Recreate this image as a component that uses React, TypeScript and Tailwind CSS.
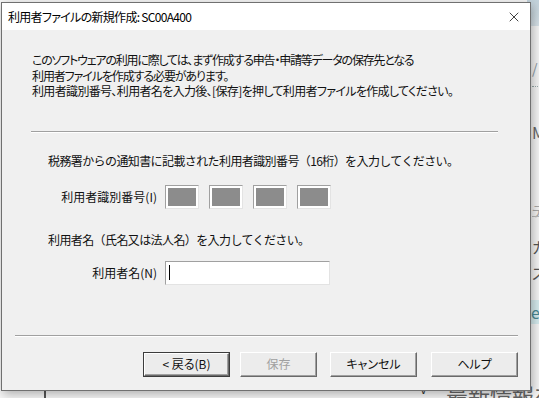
import { X } from 'lucide-react';

const jp = "font-['Noto_Sans_CJK_JP','Noto_Sans',sans-serif] [font-feature-settings:'palt']";

const IdBox = () => (
  <div className="w-[34px] h-[24px] border border-t-[#a0a0a0] border-l-[#a0a0a0] border-b-[#e3e3e3] border-r-[#e3e3e3] bg-white p-[2px]">
    <div className="w-full h-full bg-[#8c8c8c]" />
  </div>
);

const Btn = ({ label, w, isDefault, disabled }: { label: string; w: string; isDefault?: boolean; disabled?: boolean }) => (
  <div className={`${w} h-[25px] ${isDefault ? 'border border-[#3c3c3c]' : ''}`}>
    <div
      className={`w-full h-full flex items-center justify-center text-[12px] bg-[#ececec] border border-t-white border-l-white border-b-[#696969] border-r-[#696969] shadow-[inset_-1px_-1px_0_#a0a0a0] ${
        disabled ? 'text-[#a0a0a0]' : 'text-[#111]'
      }`}
    >
      {label}
    </div>
  </div>
);

export default function App() {
  return (
    <div className={`relative w-[539px] h-[398px] overflow-hidden bg-[#f6f6f6] ${jp}`}>
      {/* window behind */}
      <div className="absolute right-0 top-0 w-[12px] h-[26px] bg-gradient-to-b from-[#c3d3dc] to-[#d7e2e8]" />
      <div className="absolute left-[532px] top-[58px] text-[14px] text-[#8a9aa5]">/</div>
      <div className="absolute left-[532px] top-[86px] w-[8px] border-t border-dotted border-[#9aa]" />
      <div className="absolute left-[532px] top-[120px] text-[16px] text-[#666]">Mi</div>
      <div className="absolute left-[532px] top-[200px] text-[14px] text-[#aaa]">テ</div>
      <div className="absolute left-[532px] top-[216px] w-[8px] border-t border-[#bbb]" />
      <div className="absolute left-[532px] top-[236px] text-[15px] text-[#555]">ガ</div>
      <div className="absolute left-[532px] top-[262px] text-[15px] text-[#555]">ス</div>
      <div className="absolute left-[531px] top-[300px] w-[8px] h-[24px] bg-[#d6ecef] text-[16px] text-[#4a8a95] leading-[24px]">e</div>
      <div className="absolute left-[44px] top-[390px] w-[2px] h-[8px] bg-[#555]" />
      <div className="absolute left-[420px] top-[380px] text-[12px] text-[#333]">V</div>
      <div className="absolute left-[446px] top-[380px] text-[22px] leading-[28px] text-[#666] whitespace-nowrap">最新情報を</div>

      {/* dialog */}
      <div className="absolute left-[1px] top-[2px] w-[530px] h-[389px] border border-[#707070] bg-[#f0f0f0] flex flex-col shadow-[2px_3px_10px_rgba(0,0,0,0.3)]">
        <div className="h-[27px] bg-white flex items-center justify-between pl-[6px] pr-[8px]">
          <span className="text-[12px] tracking-[-0.7px] text-[#000]">利用者ファイルの新規作成: SC00A400</span>
          <X size={16} strokeWidth={1.2} className="text-[#111]" />
        </div>

        <div className="flex-1 flex flex-col">
          <div className="pt-[22px] pl-[30px] text-[12px] leading-[15.5px] text-[#111] whitespace-nowrap">
            <p className="tracking-[-1.2px]">このソフトウェアの利用に際しては、まず作成する申告・申請等データの保存先となる</p>
            <p className="tracking-[-1.1px]">利用者ファイルを作成する必要があります。</p>
            <p className="tracking-[-0.65px]">利用者識別番号、利用者名を入力後、[保存]を押して利用者ファイルを作成してください。</p>
          </div>

          <div className="mt-[32px] ml-[29px] w-[467px] border-t border-[#a0a0a0] border-b border-b-white" />

          <p className="mt-[20px] pl-[46px] text-[12px] leading-[16px] tracking-[-0.6px] text-[#111] whitespace-nowrap [font-feature-settings:normal]">
            税務署からの通知書に記載された利用者識別番号（16桁）を入力してください。
          </p>

          <div className="mt-[16px] flex items-center">
            <span className="w-[155px] text-right text-[12px] text-[#111]">利用者識別番号(I)</span>
            <div className="ml-[8px] flex gap-[10px]">
              <IdBox />
              <IdBox />
              <IdBox />
              <IdBox />
            </div>
          </div>

          <p className="mt-[23px] pl-[46px] text-[12px] leading-[16px] tracking-[-0.6px] text-[#111] whitespace-nowrap [font-feature-settings:normal]">
            利用者名（氏名又は法人名）を入力してください。
          </p>

          <div className="mt-[13px] flex items-center">
            <span className="w-[155px] text-right text-[12px] text-[#111]">利用者名(N)</span>
            <div className="ml-[8px] w-[165px] h-[24px] border border-t-[#a0a0a0] border-l-[#a0a0a0] border-b-[#e3e3e3] border-r-[#e3e3e3] bg-white flex items-center pl-[3px]">
              <div className="w-[1px] h-[15px] bg-black" />
            </div>
          </div>

          <div className="mt-[50px] ml-[13px] w-[503px] border-t border-[#a0a0a0] border-b border-b-white" />

          <div className="mt-[15px] flex pl-[141px]">
            <Btn label="< 戻る(B)" w="w-[87px]" isDefault />
            <div className="ml-[10px]">
              <Btn label="保存" w="w-[77px]" disabled />
            </div>
            <div className="ml-[13px]">
              <Btn label="キャンセル" w="w-[87px]" />
            </div>
            <div className="ml-[14px]">
              <Btn label="ヘルプ" w="w-[87px]" />
            </div>
          </div>
        </div>
      </div>
    </div>
  );
}
